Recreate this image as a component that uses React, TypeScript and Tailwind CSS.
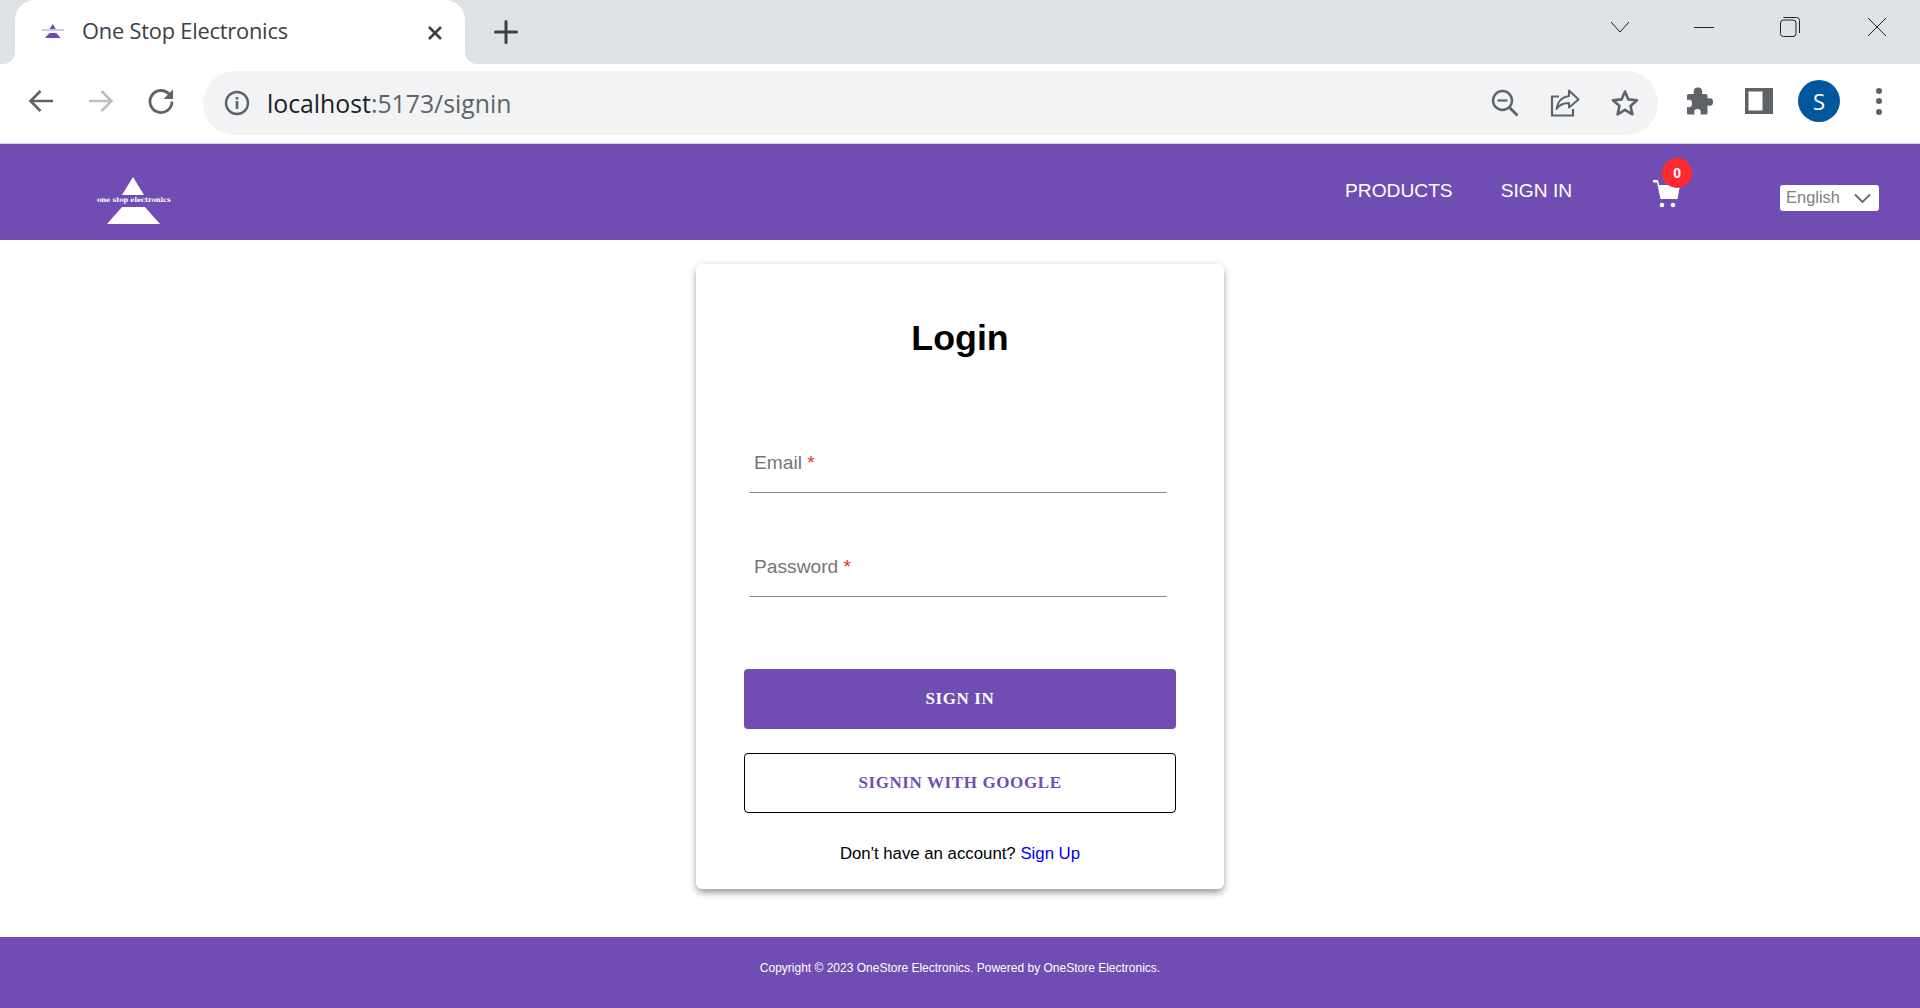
import React from "react";

const Logo = ({ small }: { small?: boolean }) => (
  <svg viewBox="0 0 74 47" className={small ? "w-[24px] h-[16px]" : "w-[74px] h-[47px]"}>
    <polygon points="36,0 47,18 25,18" fill={small ? "#6d4bb0" : "#ffffff"} />
    <polygon points="25,30 48,30 63,47 10,47" fill={small ? "#6d4bb0" : "#ffffff"} />
  </svg>
);

const Icon = ({ children, w = 28, h = 28, box = "0 0 28 28" }: { children: React.ReactNode; w?: number; h?: number; box?: string }) => (
  <svg width={w} height={h} viewBox={box} fill="none">
    {children}
  </svg>
);

const Slot = ({ children }: { children: React.ReactNode }) => (
  <div className="w-[60px] h-[60px] flex items-center justify-center shrink-0">{children}</div>
);

export default function App() {
  return (
    <div className="w-[1920px] h-[1008px] flex flex-col overflow-hidden bg-white font-['Liberation_Sans',sans-serif]">
      {/* tab strip */}
      <div className="h-[64px] bg-[#dee1e6] flex shrink-0">
        <div className="relative ml-[15px] w-[450px] h-[64px] bg-white rounded-t-[20px] flex items-center shrink-0">
          <div className="absolute left-[-12px] bottom-0 w-[12px] h-[12px] bg-white">
            <div className="w-full h-full bg-[#dee1e6] rounded-br-[12px]" />
          </div>
          <div className="absolute right-[-12px] bottom-0 w-[12px] h-[12px] bg-white">
            <div className="w-full h-full bg-[#dee1e6] rounded-bl-[12px]" />
          </div>
          <div className="ml-[27px] mb-[2px] w-[22px] h-[16px] flex relative">
            <Logo small />
            <span className="absolute left-0 top-[6px] w-[22px] h-[2px] bg-[#cfc6e6]" />
          </div>
          <span className="ml-[18px] mb-[3px] text-[21.8px] leading-[30px] text-[#3c4043] font-['Open_Sans',sans-serif] tracking-[-0.2px]">One Stop Electronics</span>
          <svg className="absolute left-[412px] top-[25px]" width="16" height="16" viewBox="0 0 16 16">
            <path d="M2 2 L14 14 M14 2 L2 14" stroke="#3c4043" strokeWidth="2.6" />
          </svg>
        </div>
        <div className="ml-[23px] w-[36px] h-[64px] flex items-center justify-center">
          <svg width="24" height="24" viewBox="0 0 24 24">
            <path d="M12 1.5 V22.5 M1.5 12 H22.5" stroke="#3c4043" strokeWidth="3" strokeLinecap="round" />
          </svg>
        </div>
        <div className="flex-1" />
        <div className="h-[54px] w-[321px] flex items-center">
          <div className="w-[20px] ml-[11px]">
            <svg width="20" height="12" viewBox="0 0 20 12"><path d="M1 1 L10 11 L19 1" stroke="#202124" strokeWidth="1" fill="none" /></svg>
          </div>
          <div className="ml-[64px] w-[20px] h-[1px] bg-[#202124]" />
          <div className="ml-[66px] w-[20px]">
            <svg width="20" height="20" viewBox="0 0 20 20" fill="none">
              <rect x="0.5" y="3" width="15.5" height="16.5" rx="3" stroke="#202124" />
              <path d="M3.5 0.5 H16.5 Q19.5 0.5 19.5 3.5 V16" stroke="#202124" />
            </svg>
          </div>
          <div className="ml-[67px] w-[20px]">
            <svg width="20" height="20" viewBox="0 0 20 20"><path d="M1 1 L19 19 M19 1 L1 19" stroke="#202124" strokeWidth="1" /></svg>
          </div>
        </div>
      </div>

      {/* toolbar */}
      <div className="h-[80px] bg-white border-b border-[#d3d5da] flex items-start pt-[7px] pl-[11px] shrink-0">
        <Slot>
          <Icon w={26} h={24} box="0 0 26 24"><path d="M25 12 H3 M12.5 2 L2.5 12 L12.5 22" stroke="#5f6368" strokeWidth="2.6" /></Icon>
        </Slot>
        <Slot>
          <Icon w={26} h={24} box="0 0 26 24"><path d="M1 12 H23 M13.5 2 L23.5 12 L13.5 22" stroke="#bdbfc3" strokeWidth="2.6" /></Icon>
        </Slot>
        <Slot>
          <Icon w={26} h={26} box="0 0 26 26">
            <path d="M21.5 6.5 A11 11 0 1 0 24 13.5" stroke="#5f6368" strokeWidth="2.8" />
            <path d="M25 1.5 V11 H15.5 Z" fill="#5f6368" />
          </Icon>
        </Slot>
        <div className="ml-[12px] w-[1455px] h-[64px] rounded-full bg-[#f1f3f4] flex items-center shrink-0">
          <div className="ml-[21px] w-[26px] h-[26px] shrink-0">
            <Icon w={26} h={26} box="0 0 26 26">
              <circle cx="13" cy="13" r="11" stroke="#5f6368" strokeWidth="2.4" />
              <rect x="11.7" y="11" width="2.6" height="8" fill="#5f6368" />
              <rect x="11.7" y="7" width="2.6" height="2.6" fill="#5f6368" />
            </Icon>
          </div>
          <div className="ml-[17px] text-[24.8px] leading-[32px] font-['Open_Sans',sans-serif] text-[#202124]">
            localhost<span className="text-[#5f6368]">:5173/signin</span>
          </div>
          <div className="flex-1" />
          <Slot>
            <Icon w={28} h={28} box="0 0 28 28">
              <circle cx="11.5" cy="11.5" r="9.5" stroke="#5f6368" strokeWidth="2.4" />
              <path d="M6.5 11.5 H16.5" stroke="#5f6368" strokeWidth="2.2" />
              <path d="M18.5 18.5 L26.5 26.5" stroke="#5f6368" strokeWidth="2.8" />
            </Icon>
          </Slot>
          <Slot>
            <Icon w={30} h={28} box="0 0 30 28">
              <path d="M9 7.5 H2 V26.5 H23 V20" stroke="#5f6368" strokeWidth="2.2" />
              <path d="M19 1.5 L28.5 10.5 L19 18.5 V14 C13.5 14 9.5 15.5 6.5 20 C7.5 12.5 12 8 19 7 Z" stroke="#5f6368" strokeWidth="2" strokeLinejoin="round" />
            </Icon>
          </Slot>
          <Slot>
            <Icon w={30} h={30} box="0 0 30 30">
              <path d="M15 3.5 L18.4 11.4 L27 12.2 L20.5 17.9 L22.4 26.3 L15 21.9 L7.6 26.3 L9.5 17.9 L3 12.2 L11.6 11.4 Z" stroke="#5f6368" strokeWidth="2.6" strokeLinejoin="round" />
            </Icon>
          </Slot>
          <div className="w-[3px]" />
        </div>
        <div className="ml-[11px] flex">
          <Slot>
            <Icon w={28} h={28} box="0 0 28 28">
              <path d="M2 8.5 Q2 7 3.5 7 H9 C8 2.5 10 0.5 13 0.5 C16 0.5 18 2.5 17 7 H21 Q22.5 7 22.5 8.5 V11.5 C27 10.5 28 12.5 28 15 C28 17.5 27 19.5 22.5 18.5 V26 Q22.5 27.5 21 27.5 H15.5 C16.5 23.5 15 22 12.5 22 C10 22 8.5 23.5 9.5 27.5 H3.5 Q2 27.5 2 26 V20 C6 21 7 19 7 16.5 C7 14 6 12 2 13 Z" fill="#5f6368" />
            </Icon>
          </Slot>
          <Slot>
            <Icon w={28} h={26} box="0 0 28 26">
              <rect width="28" height="26" fill="#5f6368" />
              <rect x="3.5" y="3.5" width="14" height="19" fill="#ffffff" />
            </Icon>
          </Slot>
          <Slot>
            <div className="w-[42px] h-[42px] rounded-full bg-[#01579b] text-white flex items-center justify-center text-[22px] font-['Open_Sans',sans-serif]">S</div>
          </Slot>
          <Slot>
            <div className="flex flex-col gap-[4.5px]">
              <span className="w-[6px] h-[6px] rounded-full bg-[#5f6368]" />
              <span className="w-[6px] h-[6px] rounded-full bg-[#5f6368]" />
              <span className="w-[6px] h-[6px] rounded-full bg-[#5f6368]" />
            </div>
          </Slot>
        </div>
      </div>

      {/* site header */}
      <header className="h-[96px] bg-[#704db3] flex items-start shrink-0 text-white">
        <div className="ml-[97px] mt-[33px] relative w-[74px] h-[47px]">
          <Logo />
          <span className="absolute left-0 top-[17px] text-[6.7px] leading-[12px] font-bold font-['DejaVu_Serif',serif] whitespace-nowrap tracking-[-0.1px]">one stop electronics</span>
        </div>
        <nav className="ml-[1174px] mt-[35px] flex text-[19.2px] leading-[24px] gap-[48px]">
          <span>PRODUCTS</span>
          <span>SIGN IN</span>
        </nav>
        <div className="relative ml-[81px] mt-[36px] w-[28px] h-[28px]">
          <svg width="28" height="28" viewBox="0 0 28 28">
            <path d="M0 0 H5 L6 5 H27 L24.5 19 H7.5 L4 2.5 H0 Z" fill="#ffffff" />
            <circle cx="9" cy="25" r="2.3" fill="#ffffff" />
            <circle cx="20" cy="25" r="2.3" fill="#ffffff" />
          </svg>
          <span className="absolute left-[9px] top-[-22px] w-[30px] h-[30px] rounded-full bg-[#ff2a2f] text-white text-[14px] font-bold flex items-center justify-center">0</span>
        </div>
        <div className="ml-[99px] mt-[41px] w-[99px] h-[26px] bg-white rounded-[3px] flex items-center pl-[6px] text-[#808080] text-[16.4px]">
          <span className="-mt-[1px]">English</span>
          <svg className="ml-[14px]" width="17" height="11" viewBox="0 0 17 11"><path d="M1 1.5 L8.5 9 L16 1.5" stroke="#666" strokeWidth="1.8" fill="none" /></svg>
        </div>
      </header>

      {/* main */}
      <main className="flex-1 flex justify-center pt-[24px]">
        <div className="w-[528px] h-[625px] bg-white rounded-[6px] shadow-[0_5px_6px_-1px_rgba(0,0,0,0.3),0_1px_8px_rgba(0,0,0,0.16)] px-[48px] pt-[54px] flex flex-col items-center">
          <h1 className="text-[35.8px] leading-[40px] font-bold text-black">Login</h1>
          <div className="mt-[79px] w-[417px] h-[56px] -translate-x-[2.5px] border-b-[1px] border-[#8a8a8a] flex items-start">
            <span className="ml-[5px] mt-[14px] text-[19.2px] leading-[24px] text-[#767676]">Email <span className="text-[#f03030]">*</span></span>
          </div>
          <div className="mt-[48px] w-[417px] h-[56px] -translate-x-[2.5px] border-b-[1px] border-[#8a8a8a] flex items-start">
            <span className="ml-[5px] mt-[14px] text-[19.2px] leading-[24px] text-[#767676]">Password <span className="text-[#f03030]">*</span></span>
          </div>
          <button className="mt-[72px] w-[432px] h-[60px] rounded-[4px] bg-[#704db3] text-white font-bold text-[17px] tracking-[0.6px] font-['Liberation_Serif',serif]">SIGN IN</button>
          <button className="mt-[24px] w-[432px] h-[60px] rounded-[4px] border border-black bg-white text-[#704db3] font-bold text-[17px] tracking-[0.6px] font-['Liberation_Serif',serif]">SIGNIN WITH GOOGLE</button>
          <p className="mt-[31px] text-[16.8px] leading-[20px] text-black">
            Don't have an account? <span className="text-[#0000ee]">Sign Up</span>
          </p>
        </div>
      </main>

      {/* footer */}
      <footer className="h-[71px] bg-[#704db3] flex justify-center pt-[24px] shrink-0">
        <p className="text-[12px] leading-[14px] text-white">Copyright © 2023 OneStore Electronics. Powered by OneStore Electronics.</p>
      </footer>
    </div>
  );
}
